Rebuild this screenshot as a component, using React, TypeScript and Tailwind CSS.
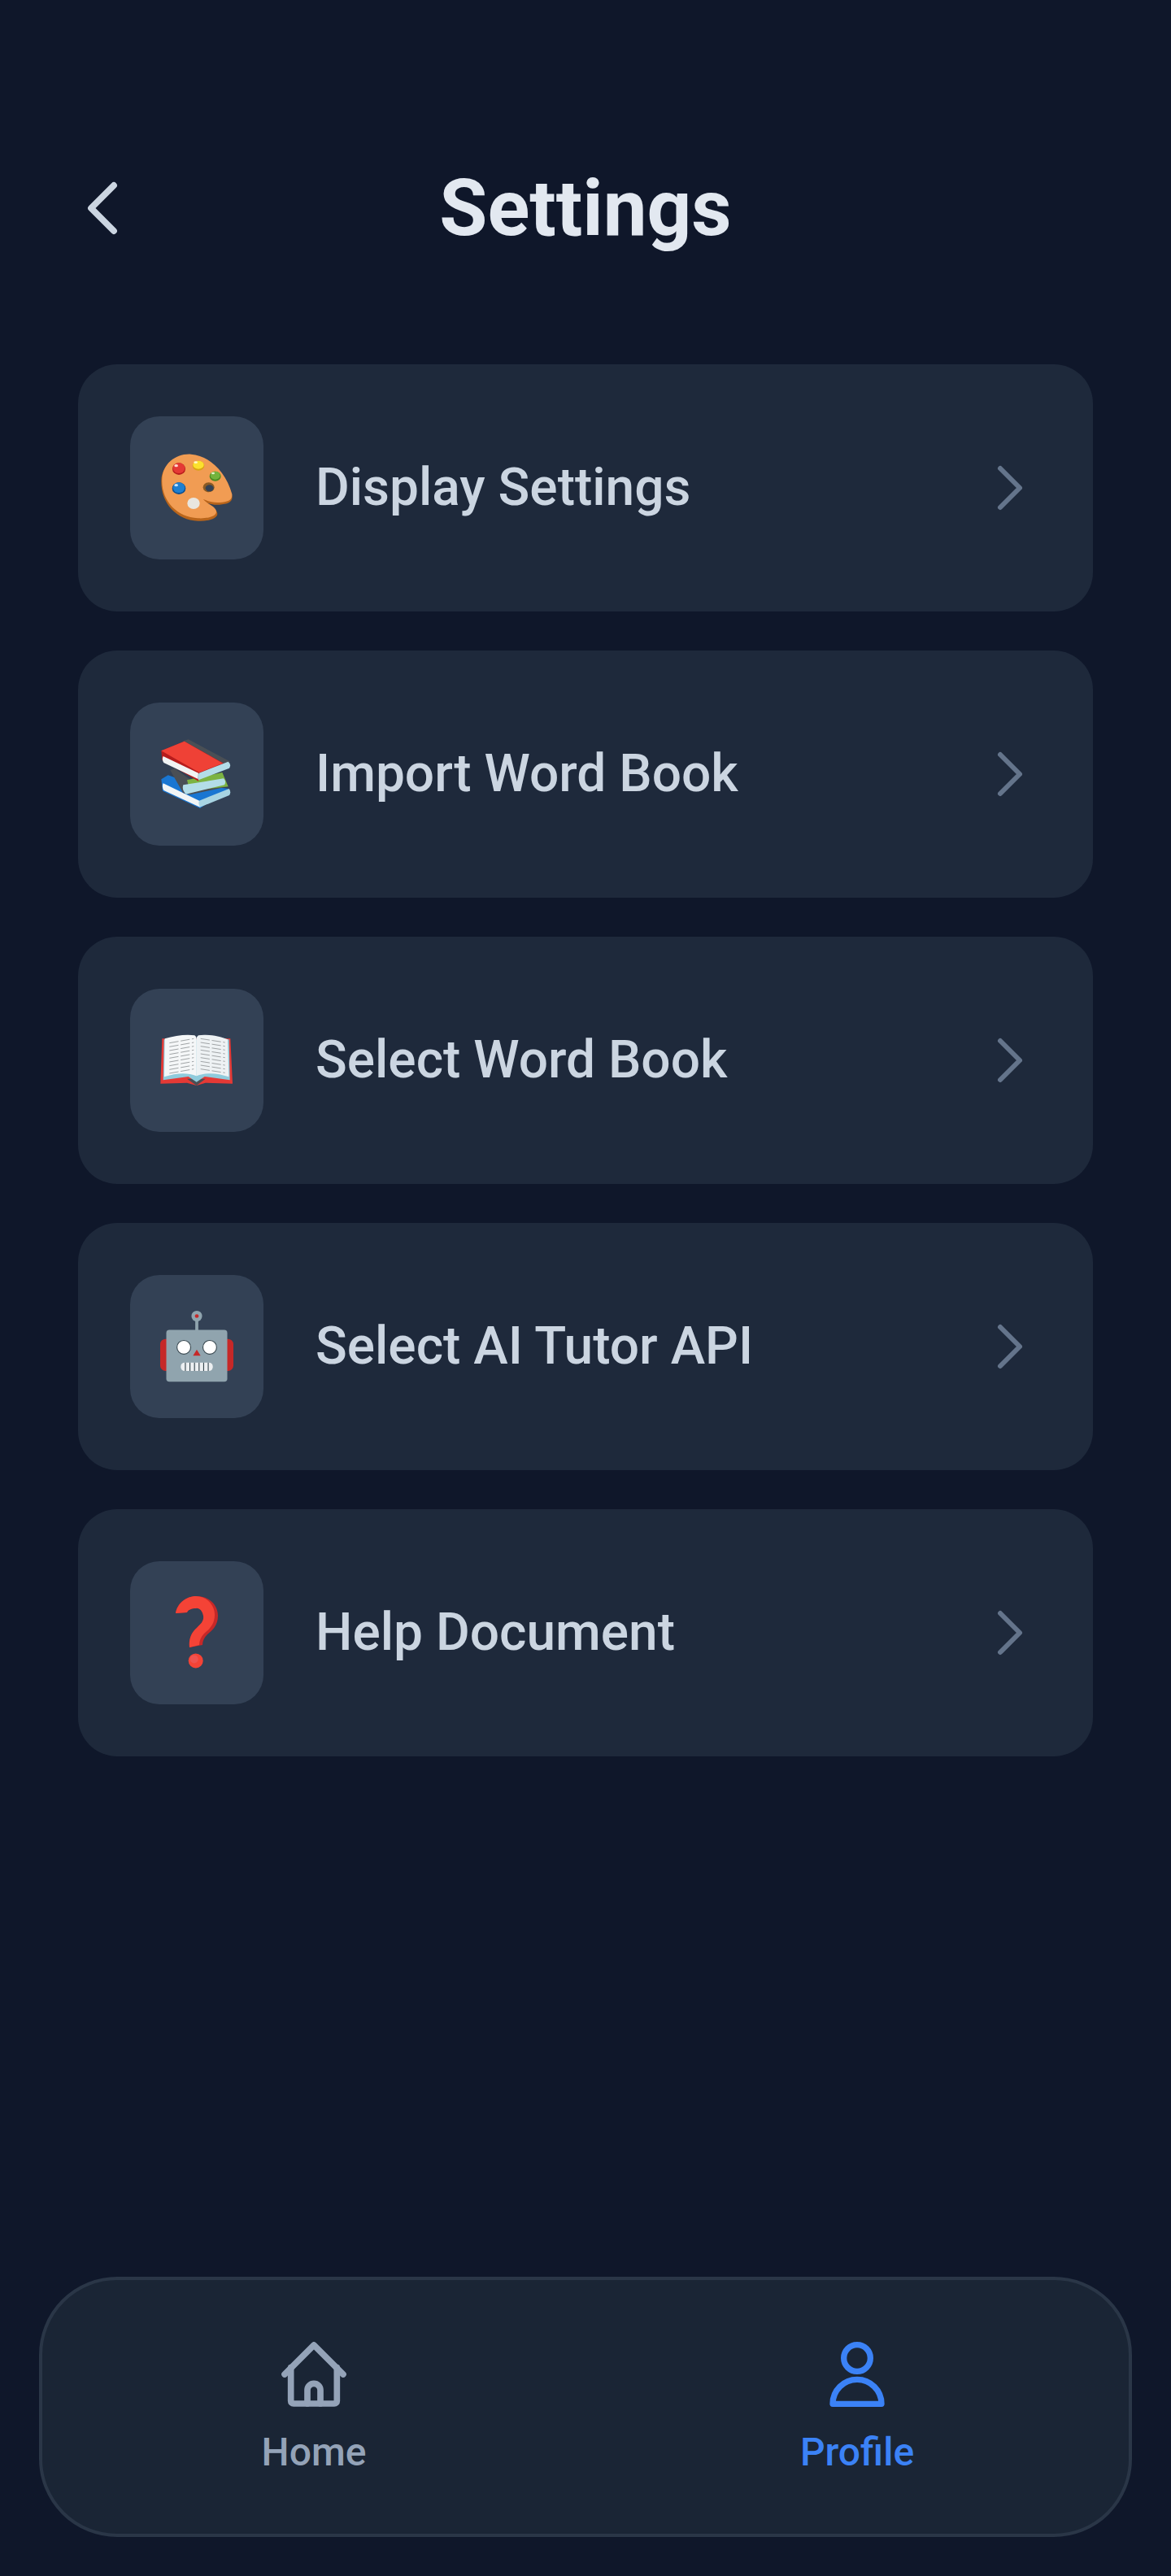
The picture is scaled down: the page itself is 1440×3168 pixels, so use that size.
import type { ReactNode } from 'react'
import { ChevronLeft, ChevronRight } from 'lucide-react'

function Palette() {
  return (
    <svg viewBox="6 0 360 360" className="w-[120px] h-[120px]">
      <path d="M55 152C58 92 110 56 165 60C230 64 295 124 316 209C320 232 300 240 270 242C245 244 225 236 212 232C225 249 262 254 262 276C262 294 225 304 190 302C110 299 52 234 55 152Z" fill="#b9651b" />
      <path d="M58 148C60 90 110 52 165 56C230 60 293 120 316 203C318 226 300 232 270 234C245 236 225 228 210 222C225 241 258 248 258 268C258 286 225 294 190 292C112 289 54 226 58 148Z" fill="#f19c53" />
      <ellipse cx="230" cy="178" rx="21" ry="18" fill="#8a5a24" />
      <ellipse cx="233" cy="181" rx="15" ry="12" fill="#334155" />
      <ellipse cx="120" cy="110" rx="24" ry="22" fill="#b71c1c" />
      <ellipse cx="120" cy="107" rx="22" ry="19" fill="#e53935" />
      <ellipse cx="192" cy="98" rx="22" ry="18" fill="#d9a514" />
      <ellipse cx="192" cy="95" rx="20" ry="15" fill="#fbe02e" />
      <ellipse cx="254" cy="137" rx="21" ry="18" fill="#4b8a22" />
      <ellipse cx="254" cy="134" rx="18" ry="15" fill="#73b33c" />
      <ellipse cx="120" cy="182" rx="25" ry="22" fill="#0f4f8f" />
      <ellipse cx="120" cy="179" rx="22" ry="19" fill="#1e7fd0" />
      <ellipse cx="174" cy="237" rx="23" ry="21" fill="#e9e6df" />
      <ellipse cx="110" cy="98" rx="7" ry="5" fill="#ffd8d0" />
      <ellipse cx="182" cy="86" rx="7" ry="4" fill="#fff8c8" />
      <ellipse cx="246" cy="126" rx="6" ry="4" fill="#e2f4c8" />
      <ellipse cx="110" cy="170" rx="7" ry="5" fill="#c4e4ff" />
    </svg>
  )
}

function Books() {
  return (
    <svg viewBox="6 6 360 360" className="w-[120px] h-[120px]">
      {/* bottom blue book */}
      <path d="M55 205L80 190L180 225L305 240L198 312L60 248Z" fill="#1976d2" />
      <path d="M62 220L195 284L198 308L64 246Q56 232 62 220Z" fill="#f1f4f5" />
      <path d="M195 284L305 240Q314 252 306 264L198 308Q190 296 195 284Z" fill="#a8d4e2" />
      {/* middle green book */}
      <path d="M88 172L104 165L160 205L280 180L300 232L160 262L135 255Z" fill="#4a4f55" />
      <path d="M150 208L280 180L302 232L160 248Z" fill="#7cb342" />
      <path d="M136 226L285 202Q296 214 288 226L146 260Q130 244 136 226Z" fill="#b3dde8" />
      {/* top red book */}
      <path d="M135 64L155 58L310 140L280 150Z" fill="#4a4f55" />
      <path d="M55 100L140 65L285 146L195 185L192 212L58 134Z" fill="#b71c1c" />
      <path d="M55 100L140 65L282 146L195 180Z" fill="#ef4136" />
      <path d="M62 120L192 182L190 204L64 144Q56 132 62 120Z" fill="#f1f4f5" />
      <path d="M194 182L302 140Q314 150 306 164L192 208Q186 194 194 182Z" fill="#b3dde8" />
    </svg>
  )
}

function OpenBook() {
  const left = [0, 1, 2, 3, 4, 5, 6, 7, 8]
  return (
    <svg viewBox="126 162 360 360" className="w-[120px] h-[120px]">
      <path d="M178 262L172 428L270 425L305 435L338 425L438 428L430 262Z" fill="#e53935" />
      <path d="M270 410L305 435L338 410Z" fill="#4a4f55" />
      <path d="M185 265L182 415L275 402L305 422L335 402L428 415L425 265Z" fill="#8fcbdc" />
      <path d="M188 262C225 250 270 245 298 250Q305 255 305 262L305 400C270 385 225 390 186 403Z" fill="#f5f7f8" />
      <path d="M420 265C390 252 340 245 312 250Q305 255 305 262L305 400C340 385 385 390 424 403Z" fill="#eef2f4" />
      {left.map(i => (
        <g key={i} stroke="#a0a4a6" strokeWidth="3" strokeDasharray="34 8">
          <line x1="205" y1={278 + i * 14} x2="295" y2={262 + i * 14} />
          <line x1="320" y1={262 + i * 14} x2="410" y2={276 + i * 14} />
        </g>
      ))}
    </svg>
  )
}

function Robot() {
  return (
    <svg viewBox="0 0 96 96" className="w-[90px] h-[90px]">
      <rect x="0" y="38" width="96" height="42" rx="7" fill="#c62828" />
      <rect x="46" y="10" width="4" height="22" fill="#90a4ae" />
      <circle cx="48" cy="8" r="7" fill="#90a4ae" />
      <circle cx="48" cy="8" r="2.5" fill="#c62828" />
      <rect x="8" y="26" width="80" height="68" rx="4" fill="#90a4ae" />
      <circle cx="31" cy="49" r="9" fill="#fff" stroke="#37474f" strokeWidth="1.2" />
      <circle cx="65" cy="49" r="9" fill="#fff" stroke="#37474f" strokeWidth="1.2" />
      <path d="M48 52l5 8H43z" fill="#c62828" />
      <rect x="27" y="69" width="42" height="11" rx="5" fill="#eceff1" />
      <path d="M33 69v11M39 69v11M45 69v11M51 69v11M57 69v11M63 69v11" stroke="#37474f" strokeWidth="1.2" />
    </svg>
  )
}

function Question() {
  return (
    <svg viewBox="0 0 120 120" className="w-[120px] h-[120px]">
      <path d="M34 36C36 23 47 15 60 15C75 15 86 26 86 39C86 51 79 57 73 62C69 66 67 70 67 75L51 78C50 68 53 60 60 54C65 49 69 46 68 39C67 33 63 29 59 30C53 30 49 32 48 35Z" fill="#c62828" />
      <path d="M34 36C36 24 47 15 59 15C72 15 82 26 82 38C82 50 75 56 69 61C65 65 63 70 63 75L51 78C50 68 53 60 60 54C65 49 69 46 68 39C67 33 63 29 59 30C53 30 49 32 48 35Z" fill="#f44336" />
      <circle cx="58.7" cy="94.4" r="9" fill="#f44336" />
      <circle cx="56.7" cy="92.4" r="5" fill="#ef5350" />
    </svg>
  )
}

const items = [
  { title: 'Display Settings', icon: <Palette /> },
  { title: 'Import Word Book', icon: <Books /> },
  { title: 'Select Word Book', icon: <OpenBook /> },
  { title: 'Select AI Tutor API', icon: <Robot /> },
  { title: 'Help Document', icon: <Question /> },
]

function SettingRow({ title, icon }: { title: string; icon: ReactNode }) {
  return (
    <div className="h-[304px] rounded-[48px] bg-[#1e293b] flex items-center pl-16 pr-[54px]">
      <div className="w-[164px] h-[176px] rounded-[36px] bg-[#334155] flex items-center justify-center shrink-0">
        {icon}
      </div>
      <span className="ml-16 flex-1 text-[64px] font-medium text-[#cbd5e1]">{title}</span>
      <ChevronRight size={96} strokeWidth={1.5} className="text-[#64748b]" />
    </div>
  )
}

export default function App() {
  return (
    <div className="relative w-[1440px] h-[3168px] bg-[#0f172a] font-['Roboto',sans-serif] overflow-hidden">
      {/* Header */}
      <div className="h-[448px] pt-[200px] px-[70px] grid grid-cols-[1fr_auto_1fr] items-start">
        <ChevronLeft size={112} strokeWidth={1.67} className="text-[#cbd5e1]" />
        <h1 className="text-[96px] leading-[112px] font-bold text-[#e2e8f0]">Settings</h1>
      </div>

      {/* Menu */}
      <div className="px-24 flex flex-col gap-12">
        {items.map(item => (
          <SettingRow key={item.title} title={item.title} icon={item.icon} />
        ))}
      </div>

      {/* Bottom nav */}
      <div className="absolute left-12 top-[2800px] w-[1344px] h-[320px] rounded-[96px] border-4 border-[#2a3647] bg-[#1a2535] grid grid-cols-2 pt-[76px]">
        <div className="flex flex-col items-center text-[#94a3b8]">
          <svg viewBox="0 0 24 24" className="w-20 h-20" fill="none" stroke="currentColor" strokeWidth="2.3" strokeLinecap="round" strokeLinejoin="round">
            <path d="M1.2 12 12 1.2 22.8 12" />
            <path d="M3.5 9.5V21.8a1 1 0 0 0 1 1h15a1 1 0 0 0 1-1V9.5" />
            <path d="M9.6 22.8v-5a2.4 2.4 0 0 1 4.8 0v5" />
          </svg>
          <span className="mt-[28px] text-[48px] leading-[56px] font-medium">Home</span>
        </div>
        <div className="flex flex-col items-center text-[#3b82f6]">
          <svg viewBox="0 0 24 24" className="w-20 h-20" fill="none" stroke="currentColor" strokeWidth="2.2" strokeLinecap="round" strokeLinejoin="round">
            <circle cx="12" cy="6" r="4.9" />
            <path d="M3 22.9a9 9 0 0 1 18 0z" />
          </svg>
          <span className="mt-[28px] text-[48px] leading-[56px] font-medium">Profile</span>
        </div>
      </div>
    </div>
  )
}
